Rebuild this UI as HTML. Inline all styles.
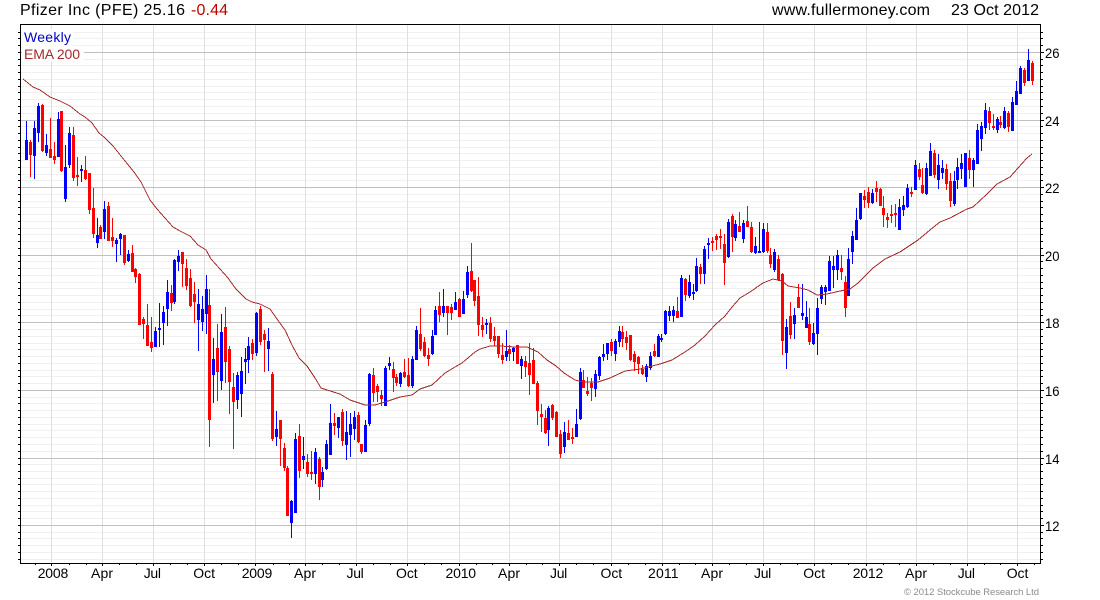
<!DOCTYPE html>
<html><head><meta charset="utf-8"><title>Pfizer Inc (PFE)</title>
<style>html,body{margin:0;padding:0;background:#fff;overflow:hidden}svg{display:block;font-family:"Liberation Sans",Arial,sans-serif}</style>
</head><body>
<svg width="1100" height="600" viewBox="0 0 1100 600" xmlns="http://www.w3.org/2000/svg">
<rect width="1100" height="600" fill="#fff"/>
<g shape-rendering="crispEdges" fill="none">
<path stroke="#f0f0f0" transform="translate(0,.5)" d="M21 32h1019M21 38h1019M21 45h1019M21 59h1019M21 65h1019M21 72h1019M21 79h1019M21 86h1019M21 92h1019M21 99h1019M21 106h1019M21 113h1019M21 126h1019M21 133h1019M21 140h1019M21 147h1019M21 153h1019M21 160h1019M21 167h1019M21 174h1019M21 180h1019M21 194h1019M21 201h1019M21 207h1019M21 214h1019M21 221h1019M21 228h1019M21 234h1019M21 241h1019M21 248h1019M21 261h1019M21 268h1019M21 275h1019M21 282h1019M21 288h1019M21 295h1019M21 302h1019M21 309h1019M21 315h1019M21 329h1019M21 336h1019M21 343h1019M21 349h1019M21 356h1019M21 363h1019M21 370h1019M21 376h1019M21 383h1019M21 397h1019M21 403h1019M21 410h1019M21 417h1019M21 424h1019M21 430h1019M21 437h1019M21 444h1019M21 451h1019M21 464h1019M21 471h1019M21 478h1019M21 484h1019M21 491h1019M21 498h1019M21 505h1019M21 511h1019M21 518h1019M21 532h1019M21 538h1019M21 545h1019M21 552h1019M21 559h1019"/>
<path stroke="#e0e0e0" transform="translate(.5,0)" d="M51 25V563M102 25V563M153 25V563M204 25V563M255 25V563M305 25V563M356 25V563M407 25V563M459 25V563M509 25V563M559 25V563M611 25V563M662 25V563M712 25V563M763 25V563M814 25V563M866 25V563M916 25V563M967 25V563M1017 25V563"/>
<path stroke="#c0c0c0" transform="translate(0,.5)" d="M21 52h1019M21 120h1019M21 187h1019M21 255h1019M21 322h1019M21 390h1019M21 458h1019M21 525h1019"/>
</g>
<rect x="22" y="29" width="51" height="17" fill="#fff"/>
<rect x="22" y="46" width="62" height="15" fill="#fff"/>
<g shape-rendering="crispEdges" fill="none" transform="translate(.5,0)">
<path stroke="#00f" d="M26 121V160M34 121V179M38 103V142M46 134V156M58 112V157M65 145V202M69 127V168M81 165V182M97 218V248M104 201V239M116 238V262M120 233V255M128 250V262M155 327V347M159 303V347M163 306V345M167 280V326M174 259V304M178 250V271M198 289V351M202 296V331M206 275V334M213 338V403M221 314V390M237 372V409M241 357V417M245 348V384M248 337V373M256 312V356M268 328V371M276 411V446M291 500V538M295 433V513M303 437V469M315 448V484M322 467V487M326 440V470M330 404V455M338 417V438M346 411V460M350 413V457M354 411V440M365 420V452M369 373V426M385 366V406M389 357V370M400 372V387M412 356V388M416 326V360M432 330V355M435 306V335M443 289V317M455 292V310M463 291V314M467 266V298M486 319V334M506 330V361M513 347V361M521 356V379M548 406V446M564 422V453M576 409V437M580 368V420M595 370V397M599 356V380M603 344V361M607 343V360M615 339V361M619 326V347M646 364V382M650 352V370M658 334V357M661 334V342M665 310V335M669 306V321M673 306V322M681 275V317M689 275V298M693 284V300M696 258V292M704 246V284M708 238V259M728 219V258M735 220V241M743 220V243M755 237V254M759 222V253M763 223V253M774 249V272M786 319V369M794 308V339M802 284V320M806 301V328M813 323V345M817 298V355M821 285V304M825 285V305M829 256V291M833 256V288M837 250V280M848 248V296M852 231V264M856 208V240M860 193V220M872 189V204M899 199V230M903 196V216M907 184V208M915 160V190M926 163V195M930 143V176M938 154V189M942 160V179M954 171V206M957 158V189M961 154V179M965 153V187M973 158V187M977 124V164M981 122V151M985 103V134M997 117V133M1004 107V129M1012 97V131M1016 81V105M1020 66V94M1028 49V81"/>
<path stroke="#00f" stroke-width="3" d="M26 140V160M34 128V156M38 106V133M46 145V153M58 119V157M65 167V199M69 133V165M81 169V171M97 235V243M104 209V232M116 240V244M120 234V239M128 254V261M155 331V347M159 328V330M163 312V323M167 292V309M174 260V302M178 256V262M198 304V320M202 309V322M206 289V314M213 359V375M221 332V381M237 375V400M241 371V394M245 359V362M248 346V360M256 313V353M268 341V349M276 429V437M291 501V523M295 439V513M303 456V460M315 452V474M322 472V480M326 444V469M330 423V455M338 417V428M346 432V445M350 424V435M354 417V429M365 425V452M369 374V424M385 368V406M389 363V366M400 373V384M412 359V386M416 330V360M432 336V354M435 310V335M443 306V313M455 302V310M463 299V314M467 272V295M486 323V325M506 351V357M513 348V352M521 359V366M548 408V430M564 432V447M576 424V437M580 372V419M595 374V389M599 357V376M603 354V357M607 343V354M615 341V354M619 331V342M646 366V377M650 356V368M658 336V357M661 338V340M665 311V334M669 311V316M673 310V316M681 278V317M689 282V296M693 292V294M696 266V291M704 249V274M708 243V245M728 222V257M735 224V238M743 223V239M755 246V253M759 251V253M763 229V252M774 252V270M786 327V353M794 315V324M802 313V316M806 317V328M813 333V344M817 308V334M821 287V299M825 287V292M829 261V291M833 266V270M837 255V270M848 259V296M852 236V252M856 220V240M860 193V219M872 193V203M899 207V230M903 205V210M907 188V207M915 165V190M926 168V194M930 151V176M938 165V180M942 168V173M954 181V204M957 167V180M961 163V169M965 153V187M973 160V170M977 130V164M981 126V139M985 110V128M997 119V130M1004 111V128M1012 102V131M1016 91V105M1020 68V94M1028 60V81"/>
<path stroke="#f00" d="M30 140V177M42 104V152M50 118V158M54 142V164M61 111V172M73 127V181M77 157V186M85 156V180M89 173V214M93 188V238M100 225V239M108 202V241M112 218V247M124 235V265M132 245V272M135 268V283M139 273V325M143 317V339M147 304V346M151 317V352M171 285V311M182 252V287M186 259V290M190 269V307M194 282V323M209 289V447M217 324V401M225 307V383M229 346V414M233 373V449M252 339V360M260 306V345M264 330V372M272 372V441M280 420V466M284 443V471M287 466V516M299 424V478M307 454V477M311 451V480M319 457V500M334 413V435M342 409V446M358 412V443M361 444V454M373 368V402M377 384V402M381 390V406M393 362V392M396 374V386M404 359V378M408 358V387M420 308V351M424 337V357M428 348V366M439 292V322M447 306V335M451 304V320M459 298V317M471 243V292M474 280V306M478 277V336M482 317V337M490 317V342M494 327V346M498 336V358M502 343V364M509 345V361M517 345V364M525 356V377M529 343V395M533 348V384M537 381V425M541 404V432M545 410V434M552 404V420M556 411V437M560 430V458M568 420V440M572 428V444M583 370V388M587 377V396M591 378V401M611 339V356M622 326V347M626 331V350M630 335V361M634 351V371M638 356V374M642 365V375M654 344V357M677 297V318M685 278V301M700 264V284M712 237V251M716 234V250M720 229V249M724 234V285M732 214V252M739 212V232M747 206V227M751 222V253M767 223V253M770 248V268M778 255V281M782 273V355M790 302V339M798 284V308M809 308V345M841 255V280M845 276V317M864 190V208M868 187V208M876 181V202M880 188V206M883 196V227M887 213V228M891 205V223M895 204V227M911 187V197M919 163V180M922 168V194M934 150V178M946 164V190M950 173V207M969 150V179M989 107V130M993 114V130M1000 116V128M1008 111V132M1024 68V86M1032 61V85"/>
<path stroke="#f00" stroke-width="3" d="M30 142V155M42 105V151M50 149V158M54 156V160M61 111V171M73 135V178M77 175V177M85 170V179M89 173V210M93 208V234M100 227V239M108 206V241M112 237V241M124 235V263M132 253V272M135 269V277M139 274V325M143 319V324M147 325V346M151 342V348M171 293V303M182 252V264M186 268V286M190 278V306M194 294V302M209 305V420M217 348V372M225 327V362M229 349V382M233 387V402M252 343V354M260 309V342M264 334V340M272 374V439M280 420V439M284 448V468M287 468V516M299 436V471M307 462V474M311 472V474M319 459V487M334 423V426M342 412V441M358 415V442M361 444V452M373 375V393M377 386V392M381 395V399M393 369V378M396 377V383M404 372V377M408 375V386M420 334V349M424 342V356M428 355V359M439 306V315M447 306V313M451 307V313M459 299V317M471 271V291M474 280V301M478 296V325M482 325V330M490 323V339M494 336V341M498 336V354M502 355V360M509 349V354M517 345V364M525 361V367M529 363V375M533 360V384M537 383V411M541 414V417M545 418V433M552 405V418M556 412V437M560 434V454M568 433V440M572 437V439M583 380V388M587 391V394M591 383V388M611 342V351M622 332V339M626 337V343M630 335V360M634 354V362M638 357V364M642 369V374M654 351V356M677 311V318M685 279V295M700 267V274M712 241V243M716 236V240M720 236V238M724 244V263M732 216V237M739 226V232M747 221V227M751 227V252M767 232V251M770 255V264M778 259V280M782 274V341M790 316V335M798 297V308M809 324V342M841 268V272M845 282V308M864 196V200M868 192V203M876 188V192M880 189V206M883 208V215M887 217V220M891 214V216M895 213V215M911 192V194M919 169V177M922 185V193M934 153V175M946 169V184M950 181V201M969 158V170M989 111V123M993 126V128M1000 122V125M1008 113V127M1024 70V83M1032 63V81"/>
</g>
<polyline fill="none" stroke="#a52a2a" stroke-width="1" shape-rendering="crispEdges" points="23,79 33,87 40,90 50,97 60,101 70,106 80,114 85,117 92,123 99,133 104,137 113,146 125,161 134,172 141,182 150,200 157,209 165,218 173,227 180,231 190,236 198,245 206,250 211,259 220,269 228,278 236,289 246,299 252,302 260,304 270,309 277,319 285,330 292,345 299,358 307,366 315,378 321,388 327,390 340,394 350,400 365,405 375,405 385,402 400,397 412,395 420,389 432,385 445,373 455,367 462,363 475,352 480,349 490,346 500,346 515,347 527,347 538,352 547,360 556,366 564,373 575,380 583,382 598,382 610,378 625,371 640,369 660,364 672,360 685,352 695,345 705,336 715,325 725,316 732,307 740,298 750,292 763,283 773,279 782,281 788,286 800,288 808,290 817,295 827,294 840,291 850,289 858,283 873,268 885,259 900,252 918,240 930,230 940,222 950,218 967,209 973,207 987,194 997,184 1010,177 1018,168 1027,158 1032,154"/>
<g shape-rendering="crispEdges" fill="none" stroke="#000">
<path d="M20.5 24.5H1040.5V563.5H20.5Z"/>
<path transform="translate(0,.5)" d="M18 32h2M18 38h2M18 45h2M18 52h2M18 59h2M18 65h2M18 72h2M18 79h2M18 86h2M18 92h2M18 99h2M18 106h2M18 113h2M18 120h2M18 126h2M18 133h2M18 140h2M18 147h2M18 153h2M18 160h2M18 167h2M18 174h2M18 180h2M18 187h2M18 194h2M18 201h2M18 207h2M18 214h2M18 221h2M18 228h2M18 234h2M18 241h2M18 248h2M18 255h2M18 261h2M18 268h2M18 275h2M18 282h2M18 288h2M18 295h2M18 302h2M18 309h2M18 315h2M18 322h2M18 329h2M18 336h2M18 343h2M18 349h2M18 356h2M18 363h2M18 370h2M18 376h2M18 383h2M18 390h2M18 397h2M18 403h2M18 410h2M18 417h2M18 424h2M18 430h2M18 437h2M18 444h2M18 451h2M18 458h2M18 464h2M18 471h2M18 478h2M18 484h2M18 491h2M18 498h2M18 505h2M18 511h2M18 518h2M18 525h2M18 532h2M18 538h2M18 545h2M18 552h2M18 559h2"/>
<path transform="translate(0,.5)" d="M1041 32h2M1041 38h2M1041 45h2M1041 52h3M1041 59h2M1041 65h2M1041 72h2M1041 79h2M1041 86h2M1041 92h2M1041 99h2M1041 106h2M1041 113h2M1041 120h3M1041 126h2M1041 133h2M1041 140h2M1041 147h2M1041 153h2M1041 160h2M1041 167h2M1041 174h2M1041 180h2M1041 187h3M1041 194h2M1041 201h2M1041 207h2M1041 214h2M1041 221h2M1041 228h2M1041 234h2M1041 241h2M1041 248h2M1041 255h3M1041 261h2M1041 268h2M1041 275h2M1041 282h2M1041 288h2M1041 295h2M1041 302h2M1041 309h2M1041 315h2M1041 322h3M1041 329h2M1041 336h2M1041 343h2M1041 349h2M1041 356h2M1041 363h2M1041 370h2M1041 376h2M1041 383h2M1041 390h3M1041 397h2M1041 403h2M1041 410h2M1041 417h2M1041 424h2M1041 430h2M1041 437h2M1041 444h2M1041 451h2M1041 458h3M1041 464h2M1041 471h2M1041 478h2M1041 484h2M1041 491h2M1041 498h2M1041 505h2M1041 511h2M1041 518h2M1041 525h3M1041 532h2M1041 538h2M1041 545h2M1041 552h2M1041 559h2"/>
<path transform="translate(.5,0)" d="M51 564v2M102 564v2M153 564v2M204 564v2M255 564v2M305 564v2M356 564v2M407 564v2M459 564v2M509 564v2M559 564v2M611 564v2M662 564v2M712 564v2M763 564v2M814 564v2M866 564v2M916 564v2M967 564v2M1017 564v2"/>
<path transform="translate(.5,0)" d="M35 564v1M69 564v1M86 564v1M119 564v1M136 564v1M170 564v1M187 564v1M221 564v1M238 564v1M273 564v1M289 564v1M322 564v1M339 564v1M373 564v1M390 564v1M424 564v1M441 564v1M476 564v1M492 564v1M526 564v1M542 564v1M576 564v1M593 564v1M628 564v1M645 564v1M679 564v1M695 564v1M729 564v1M746 564v1M780 564v1M797 564v1M831 564v1M848 564v1M883 564v1M899 564v1M933 564v1M950 564v1M984 564v1M1000 564v1M1034 564v1"/>
</g>
<g font-size="16" fill="#000">
<text x="20" y="15" textLength="165" lengthAdjust="spacing">Pfizer Inc (PFE) 25.16</text>
<text x="191" y="15" textLength="37" lengthAdjust="spacing" fill="#c00000">-0.44</text>
<text x="772" y="15" textLength="158" lengthAdjust="spacing">www.fullermoney.com</text>
<text x="951" y="15" textLength="88" lengthAdjust="spacing">23 Oct 2012</text>
</g>
<text x="24" y="42" font-size="14" fill="#0000c8" textLength="47" lengthAdjust="spacing">Weekly</text>
<text x="24" y="59" font-size="14" fill="#a52a2a" textLength="56" lengthAdjust="spacing">EMA 200</text>
<g font-size="14" fill="#000">
<text x="1045" y="58" textLength="14.5" lengthAdjust="spacingAndGlyphs">26</text>
<text x="1045" y="126" textLength="14.5" lengthAdjust="spacingAndGlyphs">24</text>
<text x="1045" y="193" textLength="14.5" lengthAdjust="spacingAndGlyphs">22</text>
<text x="1045" y="261" textLength="14.5" lengthAdjust="spacingAndGlyphs">20</text>
<text x="1045" y="328" textLength="14.5" lengthAdjust="spacingAndGlyphs">18</text>
<text x="1045" y="396" textLength="14.5" lengthAdjust="spacingAndGlyphs">16</text>
<text x="1045" y="464" textLength="14.5" lengthAdjust="spacingAndGlyphs">14</text>
<text x="1045" y="531" textLength="14.5" lengthAdjust="spacingAndGlyphs">12</text>
</g>
<g font-size="14" fill="#000">
<text x="37.7" y="578" textLength="30.6">2008</text>
<text x="91" y="578" textLength="22">Apr</text>
<text x="143.7" y="578" textLength="17.3">Jul</text>
<text x="193.3" y="578" textLength="21.7">Oct</text>
<text x="241.7" y="578" textLength="30.6">2009</text>
<text x="294" y="578" textLength="22">Apr</text>
<text x="346.5" y="578" textLength="17.3">Jul</text>
<text x="396" y="578" textLength="21.7">Oct</text>
<text x="445.5" y="578" textLength="30.6">2010</text>
<text x="498" y="578" textLength="22">Apr</text>
<text x="550" y="578" textLength="17.3">Jul</text>
<text x="600.5" y="578" textLength="21.7">Oct</text>
<text x="648" y="578" textLength="30.6">2011</text>
<text x="701" y="578" textLength="22">Apr</text>
<text x="754" y="578" textLength="17.3">Jul</text>
<text x="803.3" y="578" textLength="21.7">Oct</text>
<text x="852.7" y="578" textLength="30.6">2012</text>
<text x="905" y="578" textLength="22">Apr</text>
<text x="957.7" y="578" textLength="17.3">Jul</text>
<text x="1006.7" y="578" textLength="21.7">Oct</text>
</g>
<text x="904" y="595" font-size="9.5" fill="#8c8c8c" textLength="135" lengthAdjust="spacing">© 2012 Stockcube Research Ltd</text>
</svg>
</body></html>
